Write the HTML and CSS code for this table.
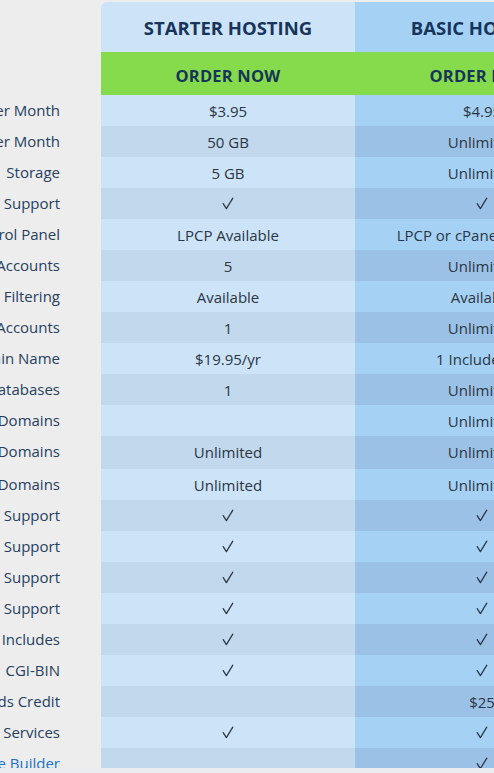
FILE: index.html
```html
<!DOCTYPE html>
<html>
<head>
<meta charset="utf-8">
<link rel="stylesheet" href="styles.css">
</head>
<body>
<svg width="0" height="0" class="defs">
  <symbol id="chk" viewBox="0 0 12 13"><path d="M1.2 6.6 L4.4 11.6 L10.8 1.2" fill="none" stroke="#2b3644" stroke-width="1.25" stroke-linecap="round" stroke-linejoin="round"/></symbol>
</svg>
<div class="frame">
  <div class="plans">
    <div class="row head">
      <div class="label"></div>
      <div class="cell starter title first">STARTER HOSTING</div>
      <div class="cell basic title last">BASIC HOSTING</div>
    </div>
    <div class="row order">
      <div class="label"></div>
      <div class="cell cta">ORDER NOW</div>
      <div class="cell cta">ORDER NOW</div>
    </div>

    <div class="row odd"><div class="label">Price Per Month</div><div class="cell starter">$3.95</div><div class="cell basic">$4.95</div></div>
    <div class="row even"><div class="label">Bandwidth Per Month</div><div class="cell starter">50 GB</div><div class="cell basic">Unlimited</div></div>
    <div class="row odd"><div class="label">Storage</div><div class="cell starter">5 GB</div><div class="cell basic">Unlimited</div></div>
    <div class="row even"><div class="label">24/7 Support</div><div class="cell starter"><svg class="ck"><use href="#chk"/></svg></div><div class="cell basic"><svg class="ck"><use href="#chk"/></svg></div></div>
    <div class="row odd"><div class="label">Control Panel</div><div class="cell starter">LPCP Available</div><div class="cell basic">LPCP or cPanel Available</div></div>
    <div class="row even"><div class="label">Email Accounts</div><div class="cell starter">5</div><div class="cell basic">Unlimited</div></div>
    <div class="row odd"><div class="label">Spam Filtering</div><div class="cell starter">Available</div><div class="cell basic">Available</div></div>
    <div class="row even"><div class="label">FTP Accounts</div><div class="cell starter">1</div><div class="cell basic">Unlimited</div></div>
    <div class="row odd"><div class="label">Domain Name</div><div class="cell starter">$19.95/yr</div><div class="cell basic">1 Included/yr</div></div>
    <div class="row even"><div class="label">MySQL Databases</div><div class="cell starter">1</div><div class="cell basic">Unlimited</div></div>
    <div class="row odd"><div class="label">Hosted Domains</div><div class="cell starter"></div><div class="cell basic">Unlimited</div></div>
    <div class="row even tall"><div class="label">Sub Domains</div><div class="cell starter">Unlimited</div><div class="cell basic">Unlimited</div></div>
    <div class="row odd"><div class="label">Parked Domains</div><div class="cell starter">Unlimited</div><div class="cell basic">Unlimited</div></div>
    <div class="row even"><div class="label">PHP Support</div><div class="cell starter"><svg class="ck"><use href="#chk"/></svg></div><div class="cell basic"><svg class="ck"><use href="#chk"/></svg></div></div>
    <div class="row odd"><div class="label">Perl Support</div><div class="cell starter"><svg class="ck"><use href="#chk"/></svg></div><div class="cell basic"><svg class="ck"><use href="#chk"/></svg></div></div>
    <div class="row even"><div class="label">Python Support</div><div class="cell starter"><svg class="ck"><use href="#chk"/></svg></div><div class="cell basic"><svg class="ck"><use href="#chk"/></svg></div></div>
    <div class="row odd"><div class="label">Ruby Support</div><div class="cell starter"><svg class="ck"><use href="#chk"/></svg></div><div class="cell basic"><svg class="ck"><use href="#chk"/></svg></div></div>
    <div class="row even"><div class="label">Server Side Includes</div><div class="cell starter"><svg class="ck"><use href="#chk"/></svg></div><div class="cell basic"><svg class="ck"><use href="#chk"/></svg></div></div>
    <div class="row odd"><div class="label">CGI-BIN</div><div class="cell starter"><svg class="ck"><use href="#chk"/></svg></div><div class="cell basic"><svg class="ck"><use href="#chk"/></svg></div></div>
    <div class="row even"><div class="label">Google Ads Credit</div><div class="cell starter"></div><div class="cell basic">$25</div></div>
    <div class="row odd"><div class="label">Web Services</div><div class="cell starter"><svg class="ck"><use href="#chk"/></svg></div><div class="cell basic"><svg class="ck"><use href="#chk"/></svg></div></div>
    <div class="row even"><div class="label"><a href="#" class="link">Website Builder</a></div><div class="cell starter"></div><div class="cell basic"><svg class="ck"><use href="#chk"/></svg></div></div>
  </div>
</div>
</body>
</html>
```
FILE: styles.css
```css
html, body {
  margin: 0;
  padding: 0;
  background: #ebecef;
  overflow: hidden;
}
body {
  font-family: "Open Sans", "Liberation Sans", sans-serif;
  font-size: 15px;
  color: #2b3644;
}
.defs {
  position: absolute;
  width: 0;
  height: 0;
}
.frame {
  height: 768px;
  overflow: hidden;
  background: #ededee;
  padding-top: 2px;
  box-sizing: border-box;
}
.plans {
  margin-left: -149px;
  width: 758px;
}
.row {
  display: grid;
  grid-template-columns: 250px 254px 254px;
  height: 31px;
}
.row.tall {
  height: 33px;
}
.row.tall .cell {
  padding-bottom: 2px;
}
.row.head {
  height: 50px;
}
.row.order {
  height: 43px;
}
.label {
  text-align: right;
  padding-right: 41px;
  white-space: nowrap;
  line-height: 31px;
  color: #26405e;
  background: #ededee;
}
.cell {
  display: flex;
  align-items: center;
  justify-content: center;
  white-space: nowrap;
}
.title {
  font-weight: 700;
  font-size: 18.5px;
  color: #17345a;
  padding-top: 1px;
}
.title.first {
  border-top-left-radius: 6px;
}
.title.last {
  border-top-right-radius: 6px;
}
.cta {
  background: #86db4c;
  font-weight: 700;
  font-size: 16.5px;
  color: #17345a;
  letter-spacing: 0.2px;
  padding-top: 3px;
}
.starter { background: #cde3f8; }
.basic { background: #a5d1f5; }
.even .starter { background: #c2d8ec; }
.even .basic { background: #9bc2e6; }
.ck {
  width: 12px;
  height: 13px;
}
.link {
  color: #1b72c9;
  text-decoration: none;
}
```
